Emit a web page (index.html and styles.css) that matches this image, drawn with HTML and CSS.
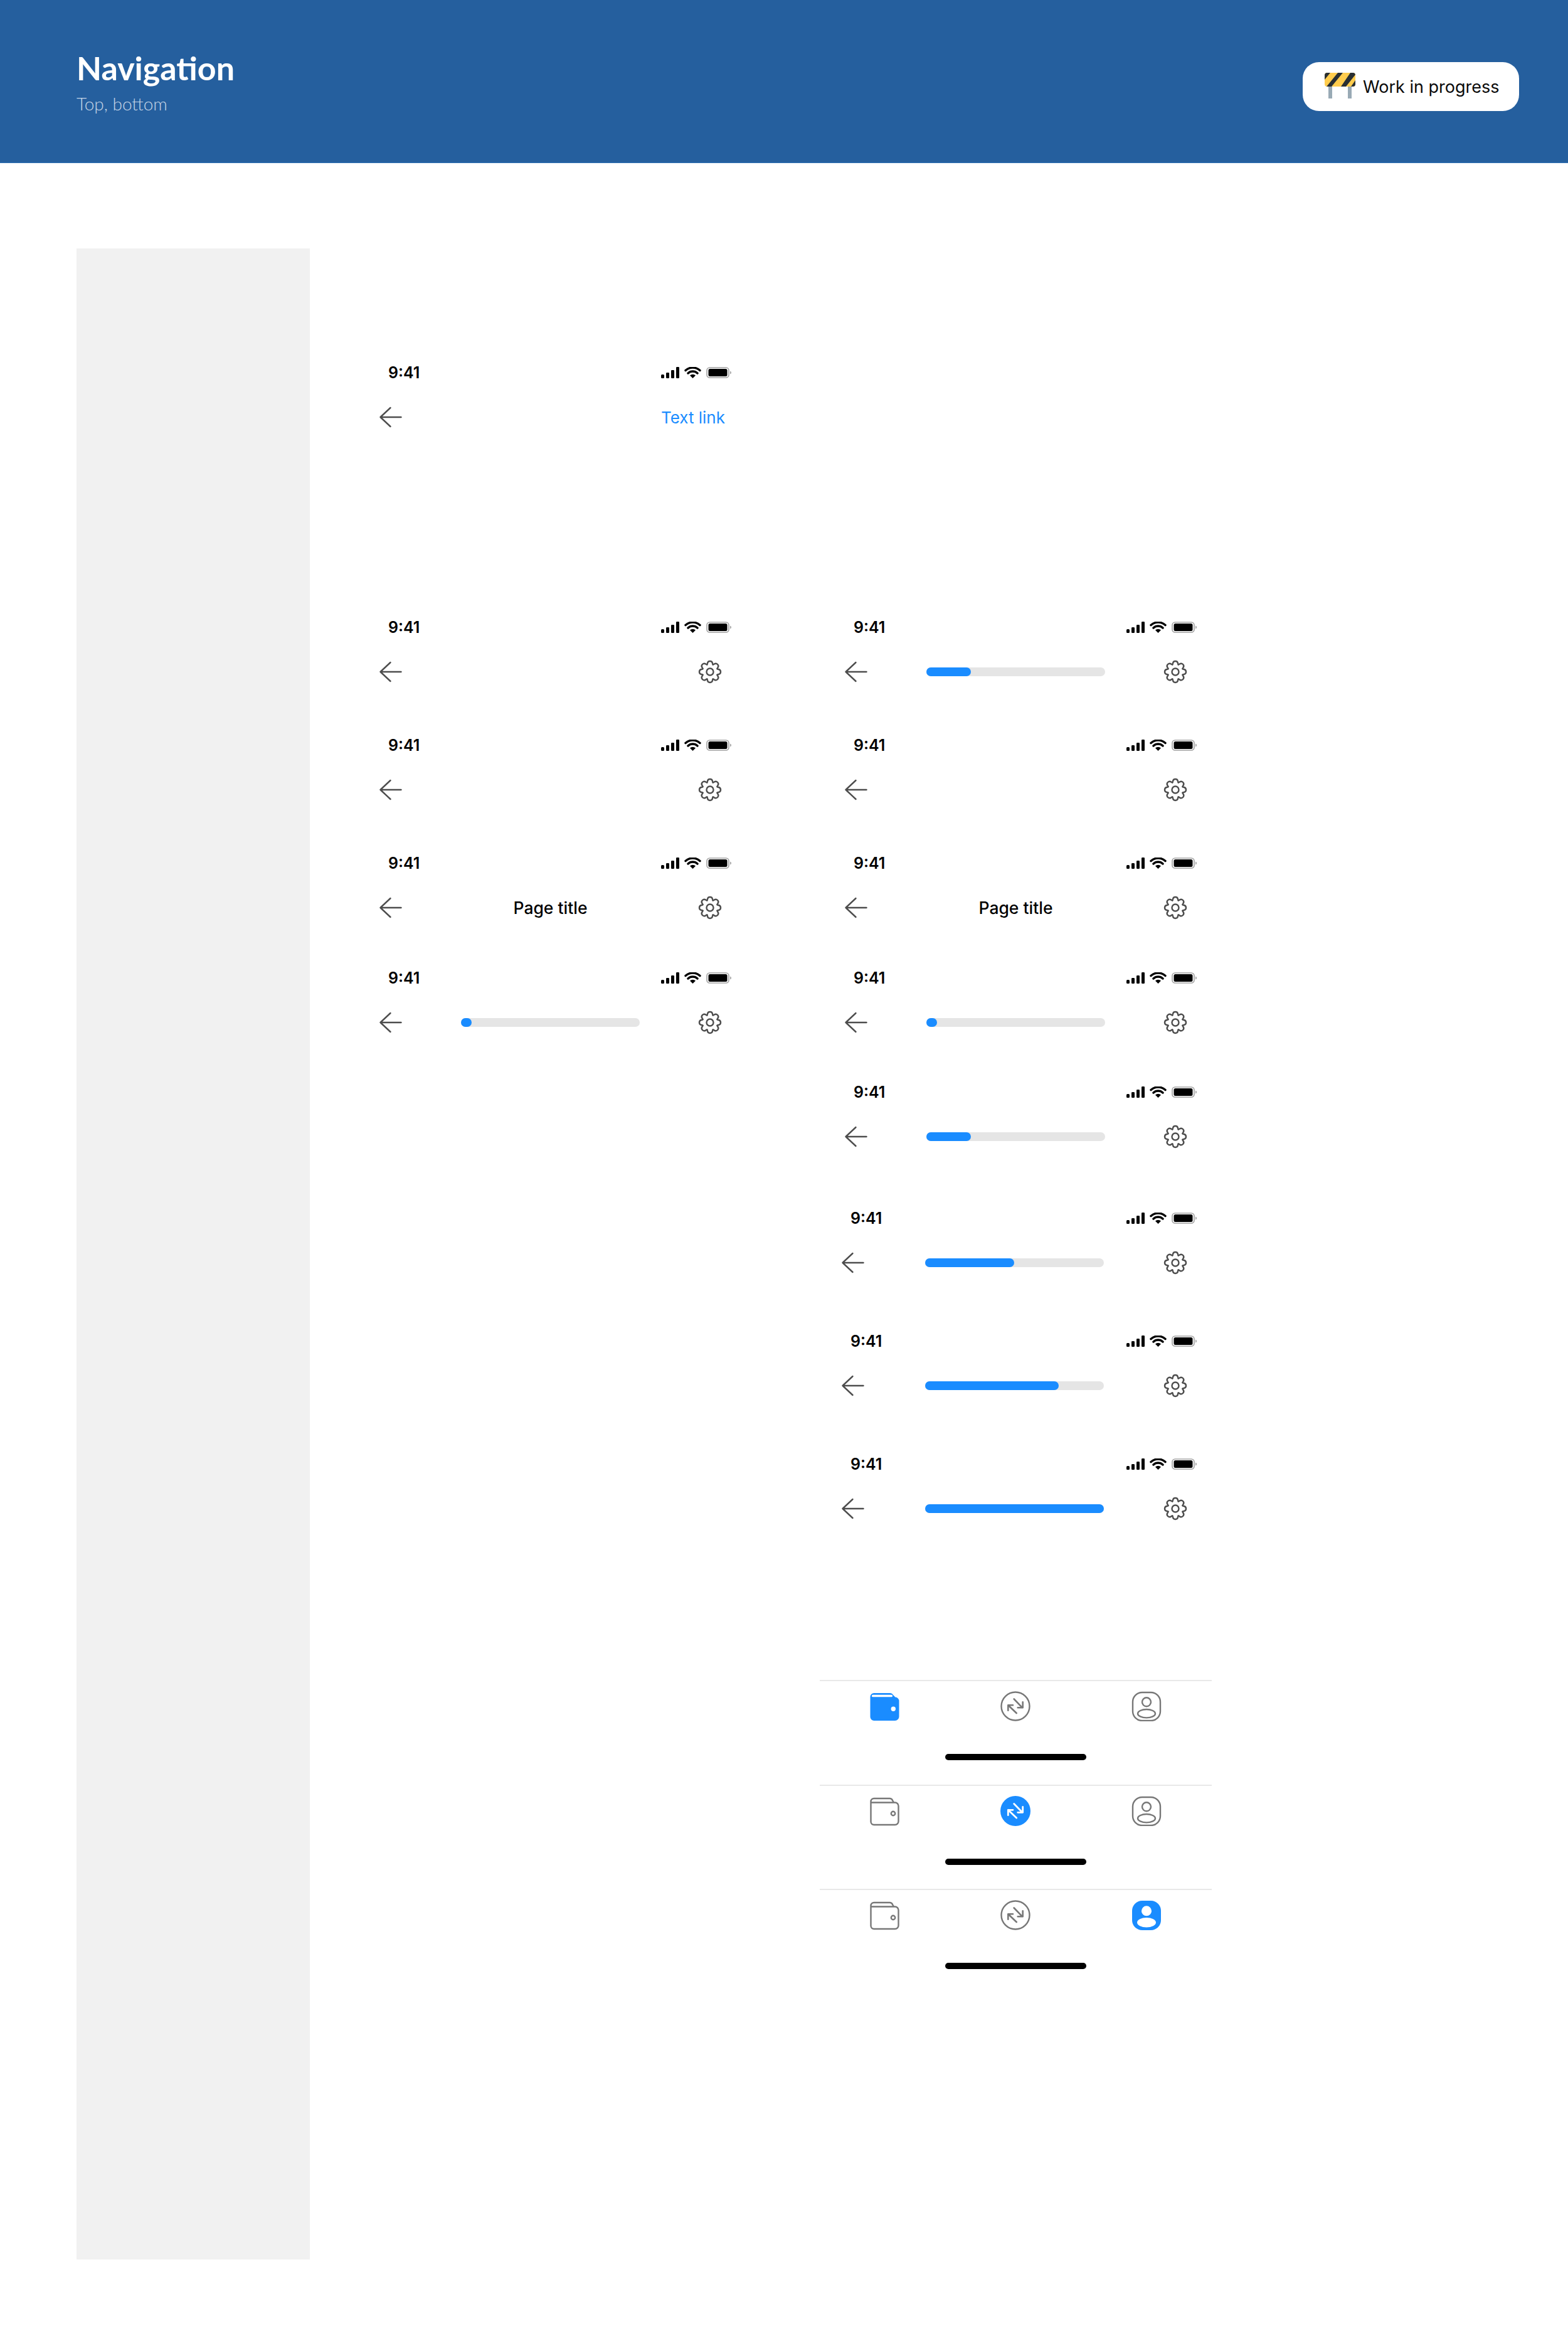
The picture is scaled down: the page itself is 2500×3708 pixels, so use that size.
FILE: index.html
```html
<!DOCTYPE html>
<html lang="en">
<head>
    <meta charset="utf-8">
    <title>Navigation</title>
    <link rel="stylesheet" href="styles.css">
</head>
<body>
    <!-- shared icons -->
    <svg class="sprites" width="0" height="0">
        <symbol id="status-icons" viewBox="0 0 112 18">
            <rect x="0" y="12" width="5" height="6" rx="1.5" fill="#000"/>
            <rect x="8" y="9" width="5" height="9" rx="1.2" fill="#000"/>
            <rect x="16" y="5" width="5" height="13" rx="1.2" fill="#000"/>
            <rect x="24" y="0" width="5" height="18" rx="1.2" fill="#000"/>
            <path d="M39 5.500a17 17 0 0 1 23 0M43 10a11 11 0 0 1 15 0" fill="none" stroke="#000" stroke-width="3.400" stroke-linecap="round"/>
            <path d="M46 13.500a6.500 6.500 0 0 1 9 0L50.500 18z" fill="#000"/>
            <rect x="73" y="1" width="35" height="16" rx="4.500" fill="none" stroke="#a0a0a0" stroke-width="1.600"/>
            <rect x="75.500" y="3" width="30" height="12" rx="2.500" fill="#000"/>
            <path d="M110 6.500c1.500.5 2 1.500 2 2.500s-.5 2-2 2.500z" fill="#a8a8a8"/>
        </symbol>
        <symbol id="back" viewBox="0 0 48 48">
            <path d="M23.500 9 7.500 24l16 15M7.500 24h33" fill="none" stroke="#4d4d4d" stroke-width="2.400" stroke-linecap="round" stroke-linejoin="round"/>
        </symbol>
        <g id="gear-tooth">
            <path d="M-4.800-11.500C-3.200-13-5.200-17 0-17S3.200-13 4.800-11.500" fill="none" stroke="#4d4d4d" stroke-width="2.400" stroke-linecap="round"/>
        </g>
        <symbol id="gear" viewBox="0 0 48 48">
            <g transform="translate(24 24)">
                <use href="#gear-tooth"/>
                <use href="#gear-tooth" transform="rotate(45)"/>
                <use href="#gear-tooth" transform="rotate(90)"/>
                <use href="#gear-tooth" transform="rotate(135)"/>
                <use href="#gear-tooth" transform="rotate(180)"/>
                <use href="#gear-tooth" transform="rotate(225)"/>
                <use href="#gear-tooth" transform="rotate(270)"/>
                <use href="#gear-tooth" transform="rotate(315)"/>
                <circle r="5.500" fill="none" stroke="#4d4d4d" stroke-width="2.400"/>
            </g>
        </symbol>
        <symbol id="wallet" viewBox="0 0 48 48">
            <path d="M1.500 10V41a5 5 0 0 0 5 5H40a5.500 5.500 0 0 0 5.500-5.500V16a5.500 5.500 0 0 0-5.500-5.500H38L36 7a5 5 0 0 0-4.500-3H6.500a5 5 0 0 0-5 5zM1.500 10.500H38" fill="none" stroke="#777" stroke-width="2.400" stroke-linejoin="round"/>
            <circle cx="37" cy="28" r="3.200" fill="none" stroke="#777" stroke-width="2.400"/>
        </symbol>
        <symbol id="wallet-on" viewBox="0 0 48 48">
            <path d="M.5 9V41a6 6 0 0 0 6 6H40a6.500 6.500 0 0 0 6.500-6.500V16a6.500 6.500 0 0 0-6-6.500L37 6a6 6 0 0 0-5.500-3H6.500a6 6 0 0 0-6 6z" fill="#1a8cff"/>
            <rect x="3" y="5.700" width="33" height="3.600" rx="1.500" fill="#fff"/>
            <circle cx="37.300" cy="28.300" r="3.700" fill="#fff"/>
        </symbol>
        <symbol id="swap" viewBox="0 0 48 48">
            <circle cx="24" cy="24" r="22.500" fill="none" stroke="#777" stroke-width="2.400"/>
            <path d="M21.700 12.500 35 26.300M35.700 17.300v9h-8M25.700 35 12.300 22.300M12.300 30.700v-8.400H20" fill="none" stroke="#777" stroke-width="2.600" stroke-linecap="round" stroke-linejoin="round"/>
        </symbol>
        <symbol id="swap-on" viewBox="0 0 48 48">
            <circle cx="24" cy="24" r="24" fill="#1a8cff"/>
            <path d="M21.700 12.500 35 26.300M35.700 17.300v9h-8M25.700 35 12.300 22.300M12.300 30.700v-8.400H20" fill="none" stroke="#fff" stroke-width="2.800" stroke-linecap="round" stroke-linejoin="round"/>
        </symbol>
        <symbol id="person" viewBox="0 0 48 48">
            <rect x="2" y="2" width="44" height="45" rx="15" fill="none" stroke="#777" stroke-width="2.400"/>
            <circle cx="24" cy="17.300" r="7" fill="none" stroke="#777" stroke-width="2.400"/>
            <ellipse cx="24" cy="35.700" rx="14" ry="6.700" fill="none" stroke="#777" stroke-width="2.400"/>
        </symbol>
        <symbol id="person-on" viewBox="0 0 48 48">
            <rect x="1" y="1" width="46" height="47" rx="16" fill="#1a8cff"/>
            <circle cx="24" cy="17.300" r="8" fill="#fff"/>
            <ellipse cx="24" cy="35.700" rx="15" ry="7.700" fill="#fff"/>
        </symbol>
    </svg>

    <header class="header">
        <div>
            <h1 class="title">Navigation</h1>
            <p class="subtitle">Top, bottom</p>
        </div>
        <div class="badge">
            <svg class="badge-icon" viewBox="0 0 49 41" width="49" height="41">
                <rect x="6" y="18" width="6" height="23" fill="#99aab5"/>
                <rect x="37" y="18" width="6" height="23" fill="#99aab5"/>
                <rect x="0" y="0" width="49" height="22" rx="4" fill="#ffcc4d"/>
                <path d="M0 4a4 4 0 0 1 4-4h5L0 11zM21 0h8L11 22H3zM41 0h4a4 4 0 0 1 4 3L34 22h-8zM49 12v6a4 4 0 0 1-4 4h-3z" fill="#292f33"/>
            </svg>
            <span>Work in progress</span>
        </div>
    </header>

    <main class="main">
        <aside class="sidebar"></aside>

        <div class="col col-left">
            <div class="frame">
                <div class="status"><span class="time">9:41</span><svg class="status-icons"><use href="#status-icons"/></svg></div>
                <div class="nav">
                    <svg class="icon"><use href="#back"/></svg>
                    <a class="text-link">Text link</a>
                </div>
            </div>

            <div class="frame gap-286">
                <div class="status"><span class="time">9:41</span><svg class="status-icons"><use href="#status-icons"/></svg></div>
                <div class="nav">
                    <svg class="icon"><use href="#back"/></svg>
                    <svg class="icon"><use href="#gear"/></svg>
                </div>
            </div>
            <div class="frame gap-68">
                <div class="status"><span class="time">9:41</span><svg class="status-icons"><use href="#status-icons"/></svg></div>
                <div class="nav">
                    <svg class="icon"><use href="#back"/></svg>
                    <svg class="icon"><use href="#gear"/></svg>
                </div>
            </div>
            <div class="frame gap-68">
                <div class="status"><span class="time">9:41</span><svg class="status-icons"><use href="#status-icons"/></svg></div>
                <div class="nav">
                    <svg class="icon"><use href="#back"/></svg>
                    <span class="page-title">Page title</span>
                    <svg class="icon"><use href="#gear"/></svg>
                </div>
            </div>
            <div class="frame gap-63">
                <div class="status"><span class="time">9:41</span><svg class="status-icons"><use href="#status-icons"/></svg></div>
                <div class="nav">
                    <svg class="icon"><use href="#back"/></svg>
                    <div class="track"><div class="fill" style="width: 6%"></div></div>
                    <svg class="icon"><use href="#gear"/></svg>
                </div>
            </div>
        </div>

        <div class="col col-right">
            <div class="frame">
                <div class="status"><span class="time">9:41</span><svg class="status-icons"><use href="#status-icons"/></svg></div>
                <div class="nav">
                    <svg class="icon"><use href="#back"/></svg>
                    <div class="track"><div class="fill" style="width: 25%"></div></div>
                    <svg class="icon"><use href="#gear"/></svg>
                </div>
            </div>
            <div class="frame gap-68">
                <div class="status"><span class="time">9:41</span><svg class="status-icons"><use href="#status-icons"/></svg></div>
                <div class="nav">
                    <svg class="icon"><use href="#back"/></svg>
                    <svg class="icon"><use href="#gear"/></svg>
                </div>
            </div>
            <div class="frame gap-68">
                <div class="status"><span class="time">9:41</span><svg class="status-icons"><use href="#status-icons"/></svg></div>
                <div class="nav">
                    <svg class="icon"><use href="#back"/></svg>
                    <span class="page-title">Page title</span>
                    <svg class="icon"><use href="#gear"/></svg>
                </div>
            </div>
            <div class="frame gap-63">
                <div class="status"><span class="time">9:41</span><svg class="status-icons"><use href="#status-icons"/></svg></div>
                <div class="nav">
                    <svg class="icon"><use href="#back"/></svg>
                    <div class="track"><div class="fill" style="width: 6%"></div></div>
                    <svg class="icon"><use href="#gear"/></svg>
                </div>
            </div>
            <div class="frame gap-62">
                <div class="status"><span class="time">9:41</span><svg class="status-icons"><use href="#status-icons"/></svg></div>
                <div class="nav">
                    <svg class="icon"><use href="#back"/></svg>
                    <div class="track"><div class="fill" style="width: 25%"></div></div>
                    <svg class="icon"><use href="#gear"/></svg>
                </div>
            </div>
            <div class="frame frame-shift gap-81">
                <div class="status"><span class="time">9:41</span><svg class="status-icons"><use href="#status-icons"/></svg></div>
                <div class="nav">
                    <svg class="icon"><use href="#back"/></svg>
                    <div class="track"><div class="fill" style="width: 50%"></div></div>
                    <svg class="icon"><use href="#gear"/></svg>
                </div>
            </div>
            <div class="frame frame-shift gap-76">
                <div class="status"><span class="time">9:41</span><svg class="status-icons"><use href="#status-icons"/></svg></div>
                <div class="nav">
                    <svg class="icon"><use href="#back"/></svg>
                    <div class="track"><div class="fill" style="width: 75%"></div></div>
                    <svg class="icon"><use href="#gear"/></svg>
                </div>
            </div>
            <div class="frame frame-shift gap-76">
                <div class="status"><span class="time">9:41</span><svg class="status-icons"><use href="#status-icons"/></svg></div>
                <div class="nav">
                    <svg class="icon"><use href="#back"/></svg>
                    <div class="track"><div class="fill" style="width: 100%"></div></div>
                    <svg class="icon"><use href="#gear"/></svg>
                </div>
            </div>

            <div class="tabs">
                <div class="tabbar">
                    <div class="tab-icons">
                        <svg class="icon"><use href="#wallet-on"/></svg>
                        <svg class="icon"><use href="#swap"/></svg>
                        <svg class="icon"><use href="#person"/></svg>
                    </div>
                    <div class="home-bar"></div>
                </div>
                <div class="tabbar">
                    <div class="tab-icons">
                        <svg class="icon"><use href="#wallet"/></svg>
                        <svg class="icon"><use href="#swap-on"/></svg>
                        <svg class="icon"><use href="#person"/></svg>
                    </div>
                    <div class="home-bar"></div>
                </div>
                <div class="tabbar">
                    <div class="tab-icons">
                        <svg class="icon"><use href="#wallet"/></svg>
                        <svg class="icon"><use href="#swap"/></svg>
                        <svg class="icon"><use href="#person-on"/></svg>
                    </div>
                    <div class="home-bar"></div>
                </div>
            </div>
        </div>
    </main>
</body>
</html>
```
FILE: styles.css
```css
* {
    margin: 0;
    box-sizing: border-box;
}
body {
    background-color: white;
    font-family: Inter, "Liberation Sans", sans-serif;
    color: black;
}
.sprites {
    position: absolute;
}

/* header */
.header {
    height: 260px;
    padding: 0 78px 0 122px;
    display: flex;
    justify-content: space-between;
    align-items: flex-start;
    background-color: #255f9e;
    border-bottom: 1px solid #2f72b5;
}
.title {
    margin-top: 78px;
    font-family: Lato, sans-serif;
    font-size: 52px;
    line-height: 60px;
    font-weight: 700;
    color: white;
}
.subtitle {
    margin-top: 10px;
    font-family: Lato, sans-serif;
    font-size: 28px;
    line-height: 34px;
    font-weight: 300;
    color: #c5d5e6;
}
.badge {
    width: 345px;
    height: 78px;
    margin-top: 99px;
    padding-left: 35px;
    display: flex;
    align-items: center;
    gap: 12px;
    background-color: white;
    border-radius: 26px;
    font-size: 27px;
    color: #0a0a0a;
}
.badge-icon {
    margin-top: -4px;
    flex-shrink: 0;
}

/* page body */
.main {
    padding: 136px 0 106px 122px;
    display: flex;
}
.sidebar {
    width: 372px;
    height: 3206px;
    background-color: #f1f1f1;
}
.col {
    width: 625px;
}
.col-left {
    margin-left: 71px;
    padding-top: 176px;
}
.col-right {
    margin-left: 117px;
    padding-top: 582px;
}

/* phone top bar */
.frame {
    height: 120px;
}
.frame-shift {
    margin-left: -5px;
}
.gap-286 { margin-top: 286px; }
.gap-81 { margin-top: 81px; }
.gap-76 { margin-top: 76px; }
.gap-68 { margin-top: 68px; }
.gap-63 { margin-top: 63px; }
.gap-62 { margin-top: 62px; }

.status {
    height: 44px;
    padding: 0 24px 0 54px;
    display: flex;
    justify-content: space-between;
    align-items: center;
}
.time {
    font-size: 25px;
    font-weight: 600;
}
.status-icons {
    width: 112px;
    height: 18px;
}
.nav {
    height: 54px;
    margin-top: 22px;
    padding: 0 34px;
    display: flex;
    justify-content: space-between;
    align-items: center;
}
.icon {
    width: 48px;
    height: 48px;
    flex-shrink: 0;
}
.text-link {
    font-size: 26px;
    color: #1a8cff;
}
.page-title {
    font-size: 26.5px;
    font-weight: 500;
}
.track {
    width: 285px;
    height: 14px;
    background-color: #e5e5e5;
    border-radius: 7px;
}
.fill {
    height: 100%;
    background-color: #1a8cff;
    border-radius: 7px;
}

/* bottom tab bars */
.tabs {
    margin-top: 246px;
}
.tabbar {
    height: 166.5px;
    padding-top: 16px;
    border-top: 2px solid #e8e8e8;
}
.tab-icons {
    display: grid;
    grid-template-columns: repeat(3, 1fr);
    justify-items: center;
}
.home-bar {
    width: 225px;
    height: 10px;
    margin: 52px auto 0;
    background-color: black;
    border-radius: 5px;
}
```
